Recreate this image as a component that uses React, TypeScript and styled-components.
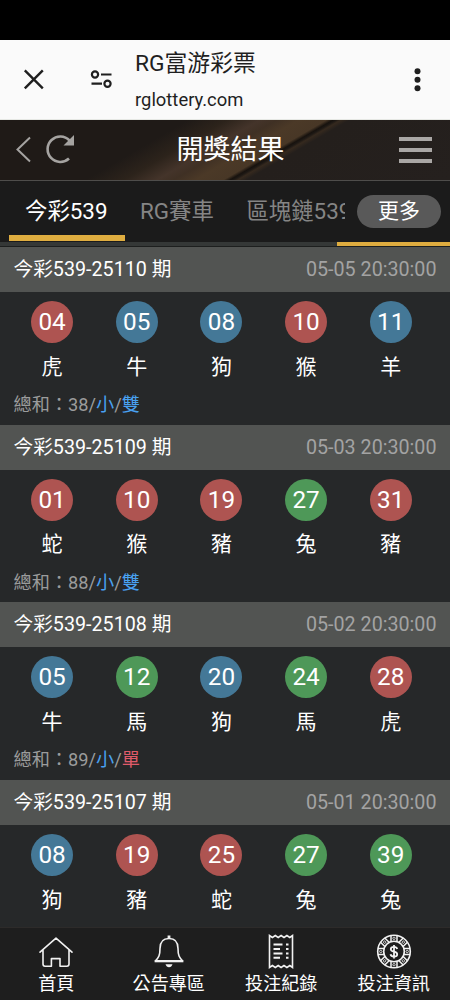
import React from "react";
import styled, { createGlobalStyle } from "styled-components";

const Global = createGlobalStyle`
  * { box-sizing: border-box; }
  body { margin: 0; background: #000; font-family: Roboto, "Noto Sans CJK TC", sans-serif; }
`;

const Screen = styled.div`
  width: 450px;
  height: 1000px;
  overflow: hidden;
  display: flex;
  flex-direction: column;
  background: #262829;
  color: #fff;
  white-space: nowrap;
`;

const StatusBar = styled.div`
  flex: none;
  height: 40px;
  background: #000;
`;

const BrowserBar = styled.div`
  flex: none;
  height: 80px;
  display: flex;
  align-items: center;
  padding: 0 28px 0 22px;
  background: #fafafa;
  border-bottom: 1px solid #e6e8e4;
  color: #1f1f1f;
`;

const SiteInfoIcon = styled.svg`
  margin: 0 22px 0 44px;
`;

const Address = styled.div`
  flex: 1;
`;

const PageTitle = styled.div`
  font-size: 22.8px;
  line-height: 32px;
`;

const PageHost = styled.div`
  font-size: 18.4px;
  line-height: 24px;
  margin-top: 8px;
`;

const AppHeader = styled.header`
  flex: none;
  height: 61px;
  display: grid;
  grid-template-columns: 110px 1fr 110px;
  align-items: center;
  border-bottom: 1px solid #4e4d4b;
  background: linear-gradient(
    149.8deg,
    #1f1a17 0%,
    #1f1a17 34%,
    #2c231b 41%,
    #44342a 47%,
    #3f3024 50%,
    #4b3927 54%,
    #483726 59%,
    #17120e 60.2%,
    #1d1814 60.8%,
    #35291e 61.6%,
    #241f1c 63.2%,
    #25201e 100%
  );
`;

const HeaderIcons = styled.div`
  display: flex;
  align-items: center;
`;

const HeaderTitle = styled.h1`
  margin: 0;
  padding-left: 11px;
  font-size: 27px;
  font-weight: 400;
  line-height: 40px;
  text-align: center;
`;

const Burger = styled.div`
  justify-self: end;
  margin-right: 18px;
  display: flex;
  flex-direction: column;
  gap: 6.6px;
`;

const BurgerLine = styled.span`
  width: 33px;
  height: 4.3px;
  background: #aaa7a5;
`;

const TabBar = styled.nav`
  flex: none;
  height: 66px;
  display: grid;
  grid-template-columns: 345px 1fr;
  background: #1b1b1b;
  border-bottom: 1px solid #1d1f1e;
`;

const TabScroller = styled.div`
  display: flex;
  gap: 32.5px;
  padding-left: 9px;
  overflow: hidden;
`;

const Tab = styled.div<{ $active?: boolean }>`
  flex: none;
  height: 60px;
  padding: ${(p) => (p.$active ? "0 17px 0 16px" : "0")};
  margin-right: ${(p) => (p.$active ? "-17px" : "0")};
  border-bottom: 6px solid ${(p) => (p.$active ? "#dfad40" : "transparent")};
  color: ${(p) => (p.$active ? "#fff" : "#858585")};
  font-size: 22.4px;
  line-height: 60px;
`;

const MoreArea = styled.div`
  padding: 14px 0 0 12px;
`;

const MoreButton = styled.button`
  display: block;
  width: 84px;
  height: 33px;
  padding: 0 0 1px;
  border: 0;
  border-radius: 17px;
  background: #595959;
  color: #fff;
  font-family: inherit;
  font-size: 21px;
  line-height: 32px;
`;

const TabTrack = styled.div`
  grid-column: 1 / -1;
  height: 4px;
  background: linear-gradient(90deg, #353837 337.5px, #dfad40 337.5px);
`;

const Results = styled.main`
  flex: 1;
  min-height: 0;
  overflow: hidden;
`;

const Draw = styled.section`
  height: 177.7px;
`;

const DrawHead = styled.div`
  height: 45px;
  display: flex;
  justify-content: space-between;
  padding: 0 13.5px;
  background: #525452;
  font-size: 19.7px;
  line-height: 45px;
`;

const DrawTime = styled.span`
  color: #a3a3a3;
`;

const Balls = styled.div`
  display: grid;
  grid-template-columns: repeat(5, 84.65px);
  padding: 9px 0 0 9.8px;
`;

const BallCell = styled.div`
  display: flex;
  flex-direction: column;
  align-items: center;
`;

const ballColors = { r: "#ae5451", b: "#447897", g: "#4e9858" };
type BallColor = keyof typeof ballColors;

const Ball = styled.div<{ $color: BallColor }>`
  width: 42px;
  height: 42px;
  border-radius: 50%;
  background: ${(p) => ballColors[p.$color]};
  font-size: 24.3px;
  line-height: 42px;
  text-align: center;
`;

const Zodiac = styled.div`
  margin-top: 8.5px;
  font-size: 21px;
  line-height: 30px;
`;

const Total = styled.div`
  padding: 10.5px 13.5px 0;
  color: #9b9c9c;
  font-size: 18.2px;
  line-height: 26px;
`;

const Mark = styled.span<{ $red?: boolean }>`
  color: ${(p) => (p.$red ? "#e05b69" : "#49a2f2")};
`;

const BottomNav = styled.nav`
  flex: none;
  height: 73px;
  display: grid;
  grid-template-columns: repeat(4, 1fr);
  background: #1e1e1e;
  border-top: 1px solid #2d2b2a;
`;

const NavItem = styled.div`
  display: flex;
  flex-direction: column;
  align-items: center;
  padding-top: 5px;
  font-size: 18.1px;
  line-height: 26px;
`;

const NavIcon = styled.svg`
  flex: none;
  width: 38px;
  height: 38px;
  fill: none;
  stroke: #f2f2f2;
  stroke-width: 1.6;
`;

const draws: { id: string; time: string; balls: [string, BallColor, string][]; sum?: string; odd?: boolean }[] = [
  { id: "25110", time: "05-05 20:30:00", sum: "38", balls: [["04", "r", "虎"], ["05", "b", "牛"], ["08", "b", "狗"], ["10", "r", "猴"], ["11", "b", "羊"]] },
  { id: "25109", time: "05-03 20:30:00", sum: "88", balls: [["01", "r", "蛇"], ["10", "r", "猴"], ["19", "r", "豬"], ["27", "g", "兔"], ["31", "r", "豬"]] },
  { id: "25108", time: "05-02 20:30:00", sum: "89", odd: true, balls: [["05", "b", "牛"], ["12", "g", "馬"], ["20", "b", "狗"], ["24", "g", "馬"], ["28", "r", "虎"]] },
  { id: "25107", time: "05-01 20:30:00", balls: [["08", "b", "狗"], ["19", "r", "豬"], ["25", "r", "蛇"], ["27", "g", "兔"], ["39", "g", "兔"]] },
];

const HomeIcon = () => (
  <NavIcon viewBox="0 0 38 38" strokeLinejoin="round" strokeLinecap="round">
    <path d="M3 19.2 19 5.2 35 19.2M6 17v14q0 2.2 2 2.2h6.400v-7.600h8.600v7.600h6.800q2.200 0 2.200-2.200V17" />
  </NavIcon>
);

const BellIcon = () => (
  <NavIcon viewBox="0 0 38 38" strokeLinejoin="round">
    <path d="M19 5.5c-6 0-9 4-9 10 0 7-1.300 9-4.500 12.300h27C29.300 24.500 28 22.500 28 15.500c0-6-3-10-9-10Z" />
    <path d="M19 5.5V2.500" strokeWidth="2.800" />
    <path d="M4.600 28.300h28.800" strokeWidth="2" />
    <path d="M15.500 31.300h7q-1 3-3.500 3t-3.500-3Z" fill="#f2f2f2" stroke="none" />
  </NavIcon>
);

const ReceiptIcon = () => (
  <NavIcon viewBox="0 0 38 38">
    <path d="M7.500 2.500v32l2.900-2 2.900 2 2.900-2 2.900 2 2.900-2 2.900 2 2.900-2 2.700 2v-32l-2.700 2-2.900-2-2.900 2-2.900-2-2.900 2-2.900-2-2.900 2Z" />
    <path d="M11.500 11.600h9M11.500 16h6.500M11.500 20.400h9M11.500 24.800h6.500M24 11.600h2.500M24 16h2.500M24 20.400h2.500M24 24.800h2.500" strokeWidth="2" />
  </NavIcon>
);

const ChipIcon = () => (
  <NavIcon viewBox="0 0 38 38">
    <circle cx="19" cy="18.500" r="16.300" />
    <circle cx="19" cy="18.500" r="10.300" />
    {[0, 45, 90, 135, 180, 225, 270, 315].map((a) => (
      <g key={a} transform={`rotate(${a} 19 18.5)`}>
        <path d="M16 2.500v6M22 2.500v6" strokeWidth="1.500" />
        <circle cx="19" cy="5.300" r="1.200" strokeWidth="0.800" />
      </g>
    ))}
    <path d="M22.200 15.900c-.4-1.400-1.600-2-3.200-2-2 0-3.200.9-3.200 2.300 0 3.400 6.400 1.600 6.400 5 0 1.500-1.300 2.400-3.200 2.400s-3.200-.8-3.500-2.300M19 12v13.400" strokeWidth="1.800" />
  </NavIcon>
);

export default function App() {
  return (
    <Screen>
      <Global />
      <StatusBar />
      <BrowserBar>
        <svg width="24" height="24" viewBox="0 0 24 24" fill="none" stroke="#1f1f1f" strokeWidth="2.4">
          <path d="M2.8 2.300 20.800 20.300M20.800 2.300 2.800 20.300" />
        </svg>
        <SiteInfoIcon width="23" height="20" viewBox="0 0 23 20" fill="none" stroke="#1f1f1f" strokeWidth="2.200">
          <circle cx="5" cy="4.500" r="3.100" />
          <path d="M11 4.500h10.500M1.500 13.700H12" />
          <circle cx="17.500" cy="13.700" r="3.100" />
        </SiteInfoIcon>
        <Address>
          <PageTitle>RG富游彩票</PageTitle>
          <PageHost>rglottery.com</PageHost>
        </Address>
        <svg width="8" height="24" viewBox="0 0 8 24" fill="#1f1f1f">
          <circle cx="3.500" cy="3.200" r="3" />
          <circle cx="3.500" cy="11.700" r="3" />
          <circle cx="3.500" cy="20.200" r="3" />
        </svg>
      </BrowserBar>
      <AppHeader>
        <HeaderIcons>
          <svg width="80" height="60" viewBox="0 0 80 60" fill="none" stroke="#a5a3a1" strokeWidth="2">
            <path d="M30 17.5 17.5 29.5 30 41.5" />
            <path d="M69 38.500A12.700 12.700 0 1 1 69.500 20.500" strokeWidth="2.600" />
            <path d="M74 15v10.500H63.500Z" fill="#a5a3a1" stroke="none" />
          </svg>
        </HeaderIcons>
        <HeaderTitle>開獎結果</HeaderTitle>
        <Burger>
          <BurgerLine />
          <BurgerLine />
          <BurgerLine />
        </Burger>
      </AppHeader>
      <TabBar>
        <TabScroller>
          <Tab $active>今彩539</Tab>
          <Tab>RG賽車</Tab>
          <Tab>區塊鏈539</Tab>
        </TabScroller>
        <MoreArea>
          <MoreButton>更多</MoreButton>
        </MoreArea>
        <TabTrack />
      </TabBar>
      <Results>
        {draws.map((d) => (
          <Draw key={d.id}>
            <DrawHead>
              <span>今彩539-{d.id} 期</span>
              <DrawTime>{d.time}</DrawTime>
            </DrawHead>
            <Balls>
              {d.balls.map(([n, c, z]) => (
                <BallCell key={n}>
                  <Ball $color={c}>{n}</Ball>
                  <Zodiac>{z}</Zodiac>
                </BallCell>
              ))}
            </Balls>
            {d.sum && (
              <Total>
                總和：{d.sum}/<Mark>小</Mark>/<Mark $red={d.odd}>{d.odd ? "單" : "雙"}</Mark>
              </Total>
            )}
          </Draw>
        ))}
      </Results>
      <BottomNav>
        <NavItem><HomeIcon />首頁</NavItem>
        <NavItem><BellIcon />公告專區</NavItem>
        <NavItem><ReceiptIcon />投注紀錄</NavItem>
        <NavItem><ChipIcon />投注資訊</NavItem>
      </BottomNav>
    </Screen>
  );
}
